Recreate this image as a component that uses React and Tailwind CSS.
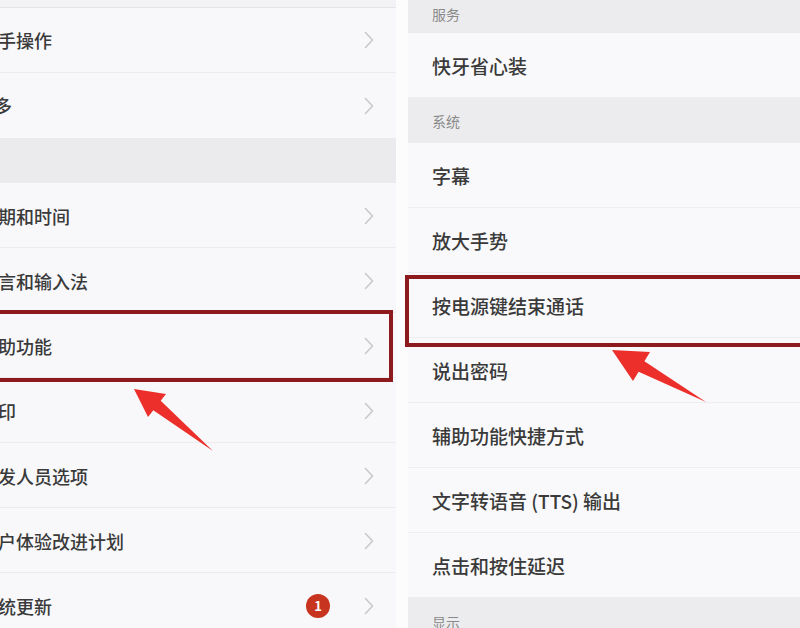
import React from "react";

const font = { fontFamily: '"Noto Sans CJK SC", "Noto Sans", sans-serif' };

const leftTop = ["单手操作", "更多"];
const leftBottom = [
  { label: "日期和时间" },
  { label: "语言和输入法" },
  { label: "辅助功能" },
  { label: "打印" },
  { label: "开发人员选项" },
  { label: "用户体验改进计划" },
  { label: "系统更新", badge: 1 },
];

function Chevron() {
  return (
    <svg width="10" height="18" viewBox="0 0 10 18" fill="none">
      <polyline points="1.5,1.5 8.5,9 1.5,16.5" stroke="#c9c9cc" strokeWidth="1.6" strokeLinecap="round" strokeLinejoin="round" />
    </svg>
  );
}

function LeftRow({ label, badge }) {
  return (
    <div className="h-[65px] shrink-0 flex items-center justify-between pr-[22px] pt-[2px] bg-[#f8f8fa] border-b border-[#ececee]">
      <span className="-ml-[20px] text-[18px] font-medium text-[#3a3a3a] whitespace-nowrap">{label}</span>
      <div className="flex items-center gap-[34px]">
        {badge && (
          <span className="w-[24px] h-[24px] rounded-full bg-[#c7341f] text-white text-[13px] font-bold flex items-center justify-center">
            {badge}
          </span>
        )}
        <Chevron />
      </div>
    </div>
  );
}

function RightRow({ label }) {
  return (
    <div className="h-[65px] shrink-0 flex items-center pl-[24px] pt-[2px] bg-[#f9f9fb] border-b border-[#eeeef0]">
      <span className="text-[19px] font-medium text-[#3a3a3a] whitespace-nowrap">{label}</span>
    </div>
  );
}

function SectionHeader({ label, className = "" }) {
  return (
    <div className={`shrink-0 flex items-center pl-[24px] bg-[#ececee] text-[14px] text-[#8a8a8a] ${className}`}>
      {label}
    </div>
  );
}

export default function App() {
  return (
    <div className="relative w-[800px] h-[628px] overflow-hidden bg-[#fcfcfd] flex gap-[12px]" style={font}>
      {/* left settings list */}
      <div className="w-[396px] shrink-0 flex flex-col overflow-hidden">
        <div className="h-[8px] shrink-0 bg-[#f3f3f5] border-b border-[#e6e6e8]" />
        <div className="h-[65px] shrink-0 flex items-center justify-between pr-[22px] bg-[#f8f8fa] border-b border-[#ececee]">
          <span className="-ml-[20px] text-[18px] font-medium text-[#3a3a3a]">{leftTop[0]}</span>
          <Chevron />
        </div>
        <div className="h-[65px] shrink-0 flex items-center justify-between pr-[22px] bg-[#f8f8fa]">
          <span className="-ml-[24px] text-[18px] font-medium text-[#3a3a3a]">{leftTop[1]}</span>
          <Chevron />
        </div>
        <div className="h-[45px] shrink-0 bg-[#ebeaed]" />
        {leftBottom.map((r) => (
          <LeftRow key={r.label} {...r} />
        ))}
      </div>

      {/* right accessibility list */}
      <div className="flex-1 flex flex-col overflow-hidden">
        <SectionHeader label="服务" className="h-[33px] pb-[4px]" />
        <RightRow label="快牙省心装" />
        <SectionHeader label="系统" className="h-[45px] pt-[2px]" />
        {["字幕", "放大手势", "按电源键结束通话", "说出密码", "辅助功能快捷方式", "文字转语音 (TTS) 输出", "点击和按住延迟"].map((l) => (
          <RightRow key={l} label={l} />
        ))}
        <SectionHeader label="显示" className="h-[45px] pt-[4px]" />
      </div>

      {/* annotations */}
      <div className="absolute left-[-6px] top-[310px] w-[399px] h-[72px] border-[4px] border-[#8d1a1c]" />
      <div className="absolute left-[405px] top-[275px] w-[420px] h-[72px] border-[4px] border-[#8d1a1c]" />
      <svg className="absolute inset-0 pointer-events-none" width="800" height="628">
        <polygon points="134,389 166,394 160.7,400.8 213,451 153.3,410.2 148,417" fill="#ec2f2a" />
        <polygon points="612,350 650,352 644.4,361.2 706,402 638.6,371.8 633,381" fill="#ec2f2a" />
      </svg>
    </div>
  );
}
